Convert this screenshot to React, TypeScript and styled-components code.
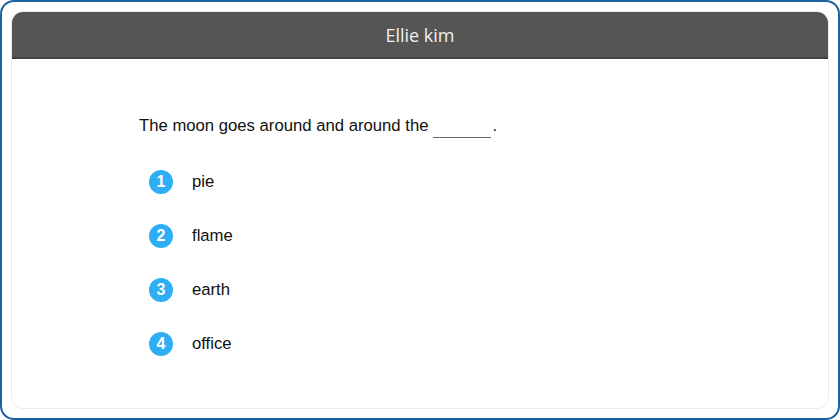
import React from "react";
import styled, { createGlobalStyle } from "styled-components";

const Global = createGlobalStyle`
  html, body {
    margin: 0;
    padding: 0;
    background: #fff;
  }
  body {
    font-family: "Liberation Sans", Arial, sans-serif;
  }
`;

const Frame = styled.div`
  box-sizing: border-box;
  width: 840px;
  height: 420px;
  border: 2px solid #1b62a3;
  border-radius: 14px;
  padding: 9px;
  background: #fff;
`;

const Card = styled.div`
  box-sizing: border-box;
  height: 100%;
  border: 1px solid #ebebeb;
  border-radius: 12px;
  overflow: hidden;
  display: flex;
  flex-direction: column;
`;

const Header = styled.div`
  height: 45px;
  background: #555555;
  border-bottom: 2px solid #444;
  display: flex;
  align-items: center;
  justify-content: center;
  color: #f0f0f0;
  font-family: "Open Sans", "Noto Sans", sans-serif;
  font-size: 18px;
`;

const Body = styled.div`
  padding: 58px 0 0 127px;
`;

const Question = styled.div`
  font-size: 16.7px;
  color: #111;
  line-height: 18px;
  display: flex;
  align-items: flex-end;
`;

const Blank = styled.span`
  display: inline-block;
  width: 58px;
  margin: 0 1px -3px 5px;
  border-bottom: 1px solid #666;
  height: 20px;
`;

const Options = styled.ol`
  list-style: none;
  margin: 34.5px 0 0 10px;
  padding: 0;
  display: flex;
  flex-direction: column;
  gap: 30.3px;
`;

const Option = styled.li`
  display: flex;
  align-items: center;
  gap: 19px;
  height: 24px;
  font-size: 16.7px;
  color: #111;
`;

const Badge = styled.span`
  width: 24px;
  height: 24px;
  border-radius: 50%;
  background: #2eaef5;
  color: #fff;
  font-weight: bold;
  font-size: 16px;
  display: flex;
  align-items: center;
  justify-content: center;
`;

const choices = ["pie", "flame", "earth", "office"];

export default function App() {
  return (
    <>
      <Global />
      <Frame>
        <Card>
          <Header>Ellie kim</Header>
          <Body>
            <Question>
              The moon goes around and around the <Blank />.
            </Question>
            <Options>
              {choices.map((c, i) => (
                <Option key={c}>
                  <Badge>{i + 1}</Badge>
                  {c}
                </Option>
              ))}
            </Options>
          </Body>
        </Card>
      </Frame>
    </>
  );
}
